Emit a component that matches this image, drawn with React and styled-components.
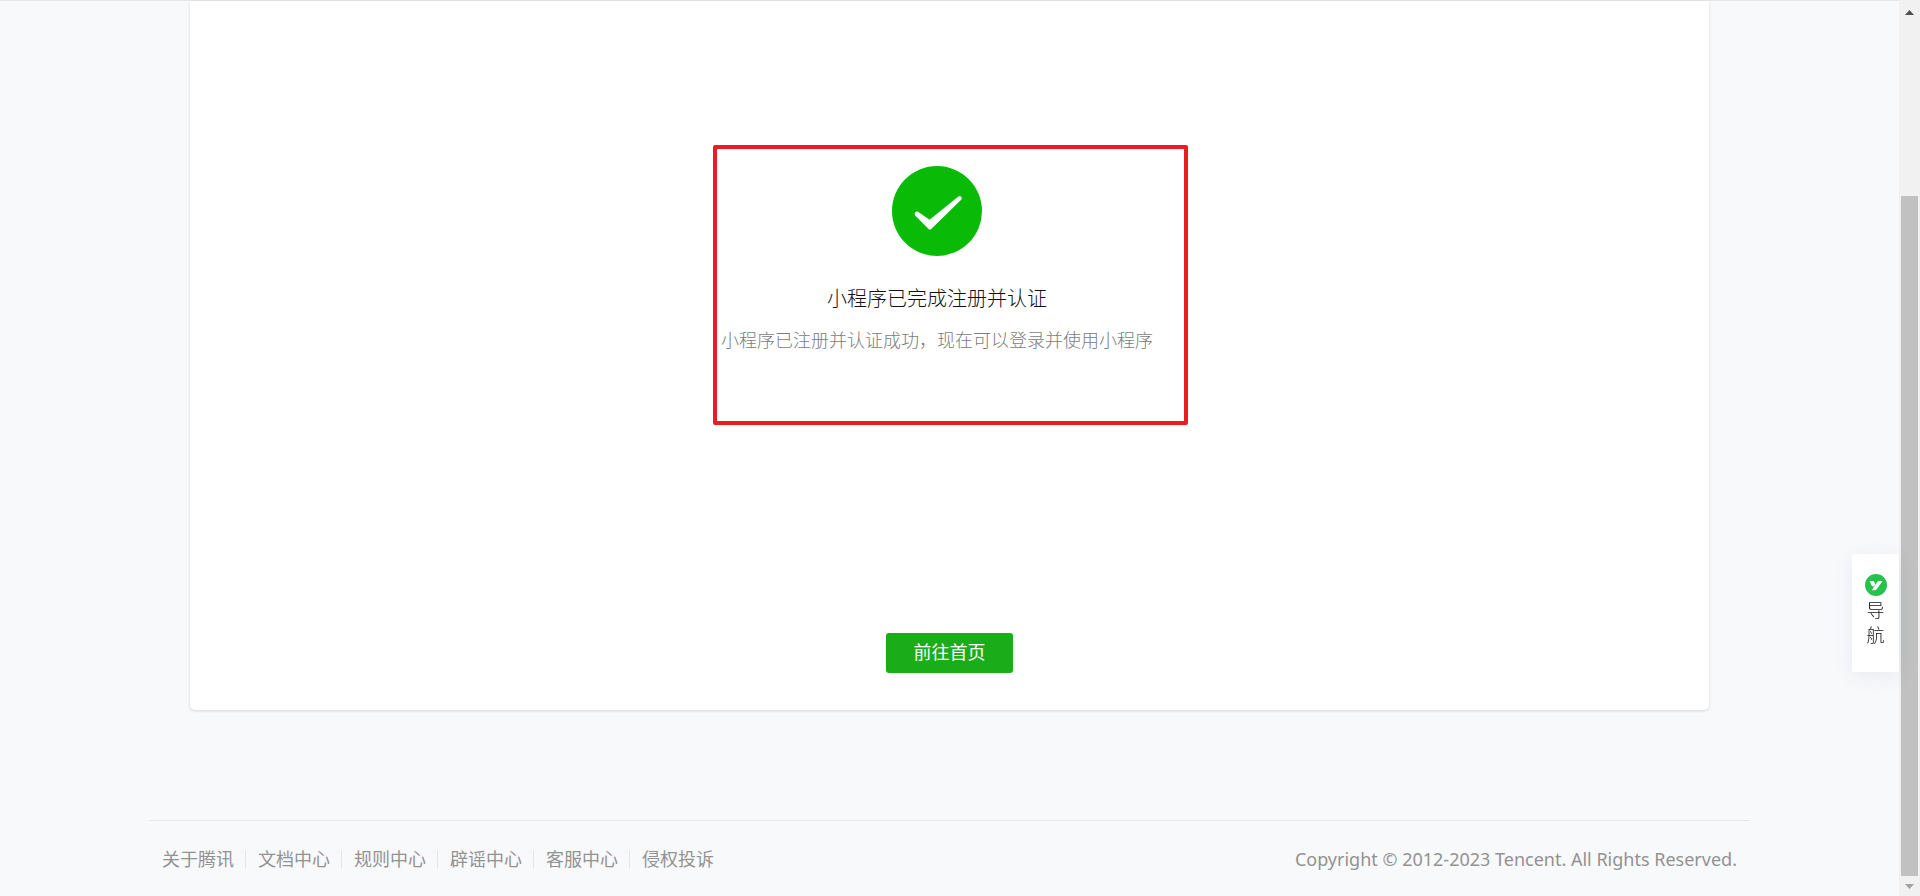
import React from "react";
import styled, { createGlobalStyle } from "styled-components";

const GlobalStyle = createGlobalStyle`
  * { box-sizing: border-box; }
  body {
    margin: 0;
    background: #f8f9fb;
    color: #353535;
    font-family: "Open Sans", "Noto Sans CJK SC", sans-serif;
    font-size: 18px;
    font-weight: 300;
    line-height: 24px;
  }
`;

const Shell = styled.div`
  display: flex;
  min-height: 100vh;
`;

const Page = styled.div`
  flex: 1;
  min-width: 0;
  border-top: 1px solid #e4e6e9;
`;

const Card = styled.main`
  display: flex;
  flex-direction: column;
  align-items: center;
  margin: 0 10%;
  padding: 144px 0 37px;
  background: #fff;
  border-radius: 0 0 5px 5px;
  box-shadow: 0 1px 3px rgba(0, 0, 0, 0.15);
`;

const Result = styled.section`
  display: flex;
  flex-direction: column;
  align-items: center;
  width: 475px;
  min-height: 280px;
  margin-left: 2px;
  padding: 17px 27px 0 0;
  border: 4px solid #ed1c24;
  border-radius: 2px;
`;

const StatusIcon = styled.svg`
  width: 90px;
  height: 90px;
`;

const Title = styled.h1`
  margin: 29px 0 0;
  font-size: 20px;
  font-weight: 300;
  line-height: 28px;
  color: #111;
`;

const Description = styled.p`
  margin: 15px 0 0;
  color: #7c7c7c;
  white-space: nowrap;
`;

const PrimaryButton = styled.button`
  min-width: 127px;
  height: 40px;
  margin-top: 208px;
  padding: 0 27px 2px;
  border: 0;
  border-radius: 3px;
  background: #1aad19;
  color: #fff;
  font: inherit;
  font-weight: 400;
  cursor: pointer;
`;

const Footer = styled.footer`
  display: flex;
  justify-content: space-between;
  margin: 110px 150px 0;
  padding: 26px 12px 25px;
  border-top: 1px solid #e4e6e9;
  color: #929292;
  font-weight: 400;
`;

const LinkList = styled.ul`
  display: flex;
  margin: 0;
  padding: 0;
  list-style: none;
`;

const LinkItem = styled.li`
  display: flex;
  align-items: center;

  & + &::before {
    content: "";
    width: 1px;
    height: 17px;
    margin: 0 12px 0 11px;
    background: #e2e4e7;
  }
`;

const FooterLink = styled.a`
  color: inherit;
  text-decoration: none;
`;

const Copyright = styled.p`
  margin: 0;
  font-family: "Noto Sans", sans-serif;
`;

const NavTab = styled.button`
  position: fixed;
  right: 21px;
  bottom: 224px;
  display: flex;
  flex-direction: column;
  align-items: center;
  width: 47px;
  height: 118px;
  padding: 20px 0;
  border: 0;
  border-radius: 2px 0 0 2px;
  background: #fff;
  box-shadow: 0 4px 20px rgba(60, 80, 110, 0.09);
  color: #111;
  font: inherit;
  line-height: 25px;
  cursor: pointer;
`;

const NavIcon = styled.svg`
  flex: none;
  width: 22px;
  height: 22px;
  margin-bottom: 2px;
`;

const ScrollTrack = styled.div`
  display: flex;
  flex-direction: column;
  align-items: center;
  width: 21px;
  background: #f1f1f1;
`;

const ScrollArrow = styled.svg`
  width: 21px;
  height: 20px;
`;

const ScrollThumb = styled.div`
  flex: 1;
  width: 17px;
  margin-top: 176px;
  background: #c1c1c1;
`;

const links = ["关于腾讯", "文档中心", "规则中心", "辟谣中心", "客服中心", "侵权投诉"];

export default function App() {
  return (
    <>
      <GlobalStyle />
      <Shell>
        <Page>
          <Card>
            <Result>
              <StatusIcon viewBox="0 0 90 90" aria-hidden="true">
                <circle cx="45" cy="45" r="45" fill="#09bb07" />
                <path
                  d="M23.2 49.4C21.8 47.6 23.8 44.6 26 45.8L37.6 53.8L66.4 30.6C68.8 29.2 70.8 31.7 69.2 33.7L39.2 63Q37.8 64.2 36.6 63Z"
                  fill="#fff"
                />
              </StatusIcon>
              <Title>小程序已完成注册并认证</Title>
              <Description>小程序已注册并认证成功，现在可以登录并使用小程序</Description>
            </Result>
            <PrimaryButton type="button">前往首页</PrimaryButton>
          </Card>
          <Footer>
            <LinkList>
              {links.map((label) => (
                <LinkItem key={label}>
                  <FooterLink href="#">{label}</FooterLink>
                </LinkItem>
              ))}
            </LinkList>
            <Copyright>Copyright © 2012-2023 Tencent. All Rights Reserved.</Copyright>
          </Footer>
        </Page>
        <ScrollTrack aria-hidden="true">
          <ScrollArrow viewBox="0 0 21 20">
            <path d="M6 15L10.500 10L15 15Z" fill="#505050" />
          </ScrollArrow>
          <ScrollThumb />
          <ScrollArrow viewBox="0 0 21 20">
            <path d="M6 8L15 8L10.500 13Z" fill="#a3a3a3" />
          </ScrollArrow>
        </ScrollTrack>
      </Shell>
      <NavTab type="button">
        <NavIcon viewBox="0 0 22 22" aria-hidden="true">
          <circle cx="11" cy="11" r="11" fill="#27c24c" />
          <path
            d="M12.200 7.900Q12.900 6.900 14 6.900H17.500L11.900 14.900Q10.900 16.300 9.400 16.300H6.800Z"
            fill="#fff"
          />
          <path
            d="M4.700 6.900H8Q9 6.900 9.300 7.800L10.200 10.400L8.700 12.600Q6.900 12.500 6.300 10.900Z"
            fill="#fff"
          />
        </NavIcon>
        <span>导</span>
        <span>航</span>
      </NavTab>
    </>
  );
}
